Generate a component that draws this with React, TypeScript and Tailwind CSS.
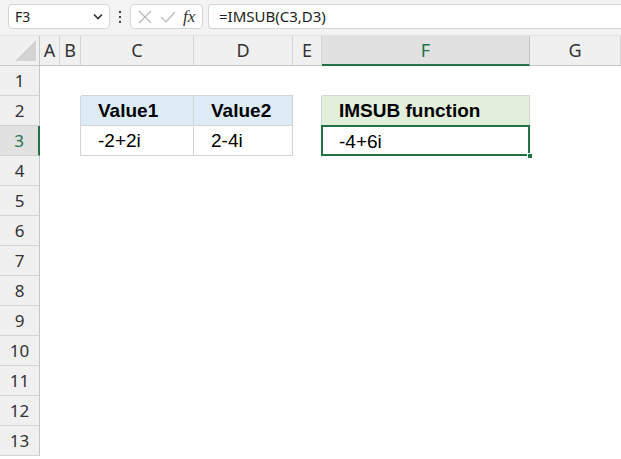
import React from "react";

const cols = [
  { l: "A", w: 20 },
  { l: "B", w: 21 },
  { l: "C", w: 113 },
  { l: "D", w: 99 },
  { l: "E", w: 29 },
  { l: "F", w: 208 },
  { l: "G", w: 91 },
];

const ui = { fontFamily: '"Noto Sans", "Open Sans", sans-serif' };
const cellFont = { fontFamily: '"Liberation Sans", Arial, sans-serif' };

function Cell({ col, row }: { col: string; row: number }) {
  const key = col + row;
  let content: React.ReactNode = null;
  let cls = "";
  if (key === "C2" || key === "D2") {
    cls = "bg-[#ddebf7] border-r border-b border-[#d4d4d4]";
    content = <span className="font-bold">{col === "C" ? "Value1" : "Value2"}</span>;
  } else if (key === "C3" || key === "D3") {
    cls = "border-r border-b border-[#d4d4d4]";
    content = col === "C" ? "-2+2i" : "2-4i";
  } else if (key === "F2") {
    cls = "bg-[#e2efda] border-r border-b border-[#d4d4d4]";
    content = <span className="font-bold">IMSUB function</span>;
  } else if (key === "F3") {
    cls = "relative";
    content = (
      <>
        -4+6i
        <div className="absolute -left-px -top-px right-0 bottom-0 border-2 border-[#217346]" />
        <div className="absolute -right-[3px] -bottom-[3px] h-[6px] w-[6px] bg-[#217346] border border-white" />
      </>
    );
  } else if (key === "B2" || key === "B3") {
    cls = "border-r border-[#d4d4d4]";
  } else if (key === "C1" || key === "D1" || key === "F1") {
    cls = "border-b border-[#d4d4d4]";
  } else if (key === "E2" || key === "E3") {
    cls = "border-r border-[#d4d4d4]";
  }
  return (
    <div
      className={`flex h-[30px] items-center pl-[17px] pt-[2px] text-[19px] text-black ${cls}`}
      style={cellFont}
    >
      {content}
    </div>
  );
}

export default function App() {
  const rows = Array.from({ length: 13 }, (_, i) => i + 1);
  return (
    <div className="h-[459px] w-[621px] overflow-hidden bg-white" style={ui}>
      {/* Formula bar */}
      <div className="flex h-[36px] items-start bg-[#f3f3f3] pt-[4px] border-b border-[#e0e0e0]">
        <div className="ml-[8px] flex h-[25px] w-[102px] items-center justify-between rounded-[4px] border border-[#d5d5d5] bg-white pl-[6px] pr-[6px] text-[14px] text-[#222]">
          <span>F3</span>
          <svg width="10" height="7" viewBox="0 0 10 7">
            <path d="M1 1.5 L5 5.5 L9 1.5" stroke="#333" strokeWidth="1.6" fill="none" />
          </svg>
        </div>
        <div className="flex h-[25px] w-[20px] flex-col items-center justify-center gap-[3px]">
          <div className="h-[2px] w-[2px] bg-[#444]" />
          <div className="h-[2px] w-[2px] bg-[#444]" />
          <div className="h-[2px] w-[2px] bg-[#444]" />
        </div>
        <div className="flex h-[25px] w-[73px] items-center rounded-[4px] border border-[#d5d5d5] bg-white pl-[7px]">
          <svg width="14" height="14" viewBox="0 0 14 14">
            <path d="M1 1 L13 13 M13 1 L1 13" stroke="#b8b8b8" strokeWidth="1.2" />
          </svg>
          <svg className="ml-[8px]" width="16" height="14" viewBox="0 0 16 14">
            <path d="M1 7 L6 12 L15 2" stroke="#b8b8b8" strokeWidth="1.2" fill="none" />
          </svg>
          <span className="ml-[7px] text-[17px] italic text-[#333]" style={{ fontFamily: '"Liberation Serif", serif' }}>
            fx
          </span>
        </div>
        <div className="ml-[5px] flex h-[25px] flex-1 items-center rounded-l-[4px] border border-r-0 border-[#d5d5d5] bg-white pl-[10px] text-[15px] text-[#222]">
          =IMSUB(C3,D3)
        </div>
      </div>

      {/* Column headers */}
      <div className="flex h-[30px] bg-[#f0f0f0]">
        <div className="relative h-[30px] w-[40px] border-r border-b border-[#c6c6c6]">
          <svg className="absolute right-[3px] bottom-[4px]" width="21" height="21" viewBox="0 0 21 21">
            <path d="M21 0 L21 21 L0 21 Z" fill="#d3d3d3" />
          </svg>
        </div>
        {cols.map((c) => (
          <div
            key={c.l}
            style={{ width: c.w }}
            className={`flex h-[30px] shrink-0 items-center justify-center text-[18px] ${
              c.l === "F"
                ? "bg-[#e1e1e1] border-r border-[#c6c6c6] border-b-2 border-b-[#217346] text-[#217346]"
                : "border-r border-b border-[#d4d4d4] border-b-[#c6c6c6] text-[#333]"
            }`}
          >
            {c.l}
          </div>
        ))}
      </div>

      {/* Rows */}
      {rows.map((r) => (
        <div key={r} className="flex h-[30px]">
          <div
            className={`flex h-[30px] w-[40px] shrink-0 items-center justify-center text-[17px] ${
              r === 3
                ? "bg-[#e1e1e1] border-b border-[#d4d4d4] border-r-2 border-r-[#217346] text-[#217346]"
                : "bg-[#f0f0f0] border-b border-[#d4d4d4] border-r border-r-[#c6c6c6] text-[#333]"
            }`}
          >
            {r}
          </div>
          {cols.map((c) => (
            <div key={c.l} style={{ width: c.w }} className="shrink-0">
              <Cell col={c.l} row={r} />
            </div>
          ))}
        </div>
      ))}
    </div>
  );
}
